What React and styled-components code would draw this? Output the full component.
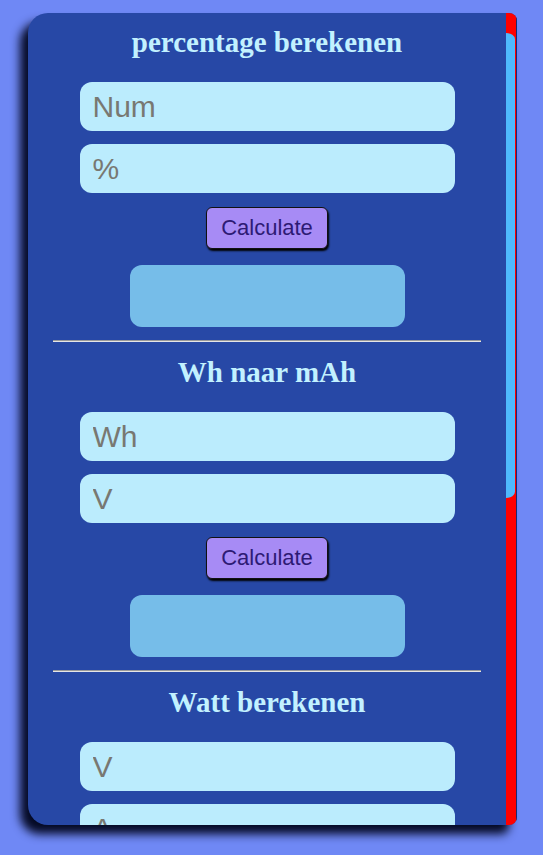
import React from 'react';
import styled, { createGlobalStyle } from 'styled-components';

const GlobalStyle = createGlobalStyle`
  html, body {
    margin: 0;
    padding: 0;
    background: #6f88f5;
    font-family: "Liberation Sans", Arial, sans-serif;
  }
`;

const sections = [
  { title: 'percentage berekenen', fields: ['Num', '%'] },
  { title: 'Wh naar mAh', fields: ['Wh', 'V'] },
  { title: 'Watt berekenen', fields: ['V', 'A'] },
  { title: 'Ampère berekenen', fields: ['W', 'V'] },
];

function App() {
  return (
    <>
      <GlobalStyle />
      <Page>
        <Card>
          <Scroller>
            {sections.map((s, i) => (
              <Section key={s.title}>
                <Title>{s.title}</Title>
                <Field type="text" placeholder={s.fields[0]} autoFocus={i === 0} $first />
                <Field type="text" placeholder={s.fields[1]} />
                <CalcButton type="button">Calculate</CalcButton>
                <Result />
                {i < sections.length - 1 && <Divider />}
              </Section>
            ))}
          </Scroller>
          {/* eigen scrollbalk: rood spoor, blauwe duim */}
          <Rail>
            <Thumb />
          </Rail>
        </Card>
      </Page>
    </>
  );
}

export default App;

const Page = styled.div`
  min-height: 855px;
  padding: 13px 0 0 28px;
  box-sizing: border-box;
`;

const Card = styled.div`
  display: flex;
  width: 489px;
  height: 812px;
  background: #2748a6;
  border-radius: 20px 8px 8px 20px;
  box-shadow: -8px 9px 10px #050a25;
  overflow: hidden;
`;

const Scroller = styled.div`
  flex: 1;
  box-sizing: border-box;
  padding: 14px 0 49px;
  overflow-y: auto;
  scrollbar-width: none;

  &::-webkit-scrollbar {
    display: none;
  }
`;

const Rail = styled.div`
  width: 11px;
  flex-shrink: 0;
  box-sizing: border-box;
  padding: 20px 1px 0 0;
  background: #ff0000;
  border-right: 1px solid #1a2a70;
`;

const Thumb = styled.div`
  height: 465px;
  background: #4fb9fd;
  border-radius: 0 10px 10px 0 / 0 7px 7px 0;
`;

const Section = styled.section`
  display: flex;
  flex-direction: column;
  align-items: center;
`;

const Title = styled.h2`
  margin: 0;
  height: 30px;
  line-height: 30px;
  font-family: "Liberation Serif", "Times New Roman", serif;
  font-size: 29px;
  font-weight: bold;
  color: #c2f1ff;
  white-space: nowrap;
`;

const Field = styled.input`
  box-sizing: border-box;
  width: 375px;
  height: 49px;
  margin-top: ${(p) => (p.$first ? '25px' : '13px')};
  padding: 0 13px;
  border: none;
  outline: none;
  border-radius: 12px;
  background: #bbecfd;
  font-family: "Liberation Sans", Arial, sans-serif;
  font-size: 30px;
  color: #222;
  caret-color: #000;

  &::placeholder {
    color: #787872;
  }
`;

const CalcButton = styled.button`
  box-sizing: border-box;
  height: 42px;
  margin-top: 14px;
  padding: 0 14px;
  border: 1.5px solid #111;
  border-radius: 6px;
  background: #a78bf5;
  box-shadow: 1px 2px 2px #000;
  font-family: "Liberation Sans", Arial, sans-serif;
  font-size: 22px;
  color: #2d1a74;
`;

const Result = styled.div`
  width: 275px;
  height: 62px;
  margin-top: 16px;
  border-radius: 12px;
  background: #76bde9;
`;

const Divider = styled.hr`
  box-sizing: border-box;
  width: 428px;
  height: 2px;
  margin: 13px 0 15px;
  border: none;
  border-top: 1px solid #9a9a9a;
  border-bottom: 1px solid #e6e6e6;
`;
